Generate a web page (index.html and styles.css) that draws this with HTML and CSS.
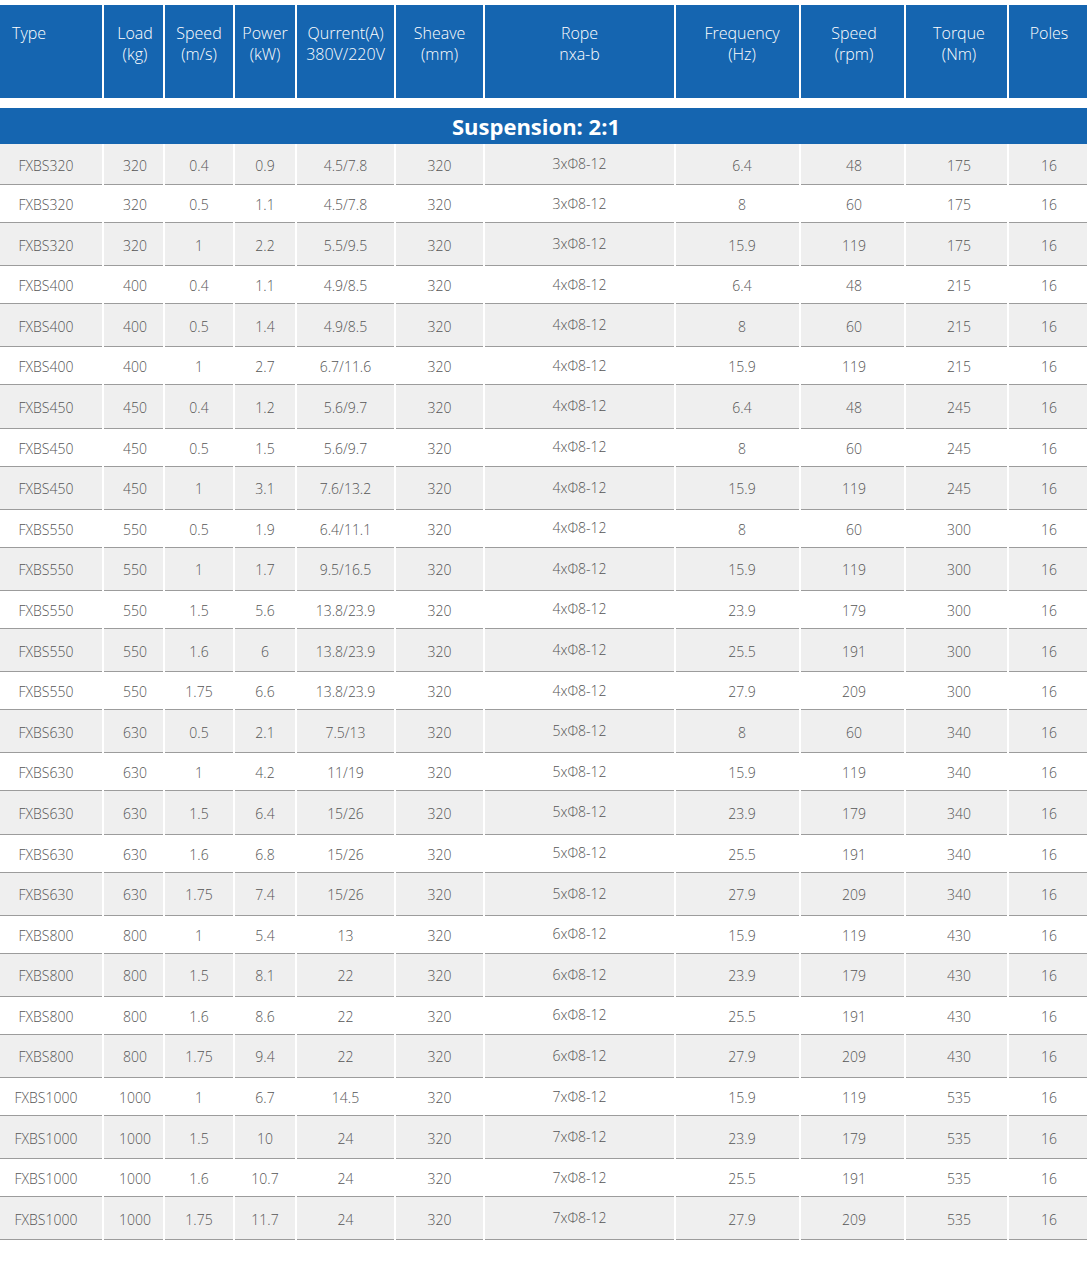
FILE: index.html
```html
<!DOCTYPE html>
<html>
<head>
<meta charset="utf-8">
<link rel="stylesheet" href="styles.css">
</head>
<body>
<div class="spec">
  <div class="row head">
    <div class="c left">Type</div>
    <div class="c">Load<br>(kg)</div>
    <div class="c">Speed<br>(m/s)</div>
    <div class="c">Power<br>(kW)</div>
    <div class="c">Qurrent(A)<br>380V/220V</div>
    <div class="c">Sheave<br>(mm)</div>
    <div class="c">Rope<br>nxa-b</div>
    <div class="c">Frequency<br>(Hz)</div>
    <div class="c">Speed<br>(rpm)</div>
    <div class="c">Torque<br>(Nm)</div>
    <div class="c">Poles</div>
  </div>
  <div class="group">Suspension: 2:1</div>
  <div class="body">
    <div class="row data first"><div class="c t">FXBS320</div><div class="c">320</div><div class="c">0.4</div><div class="c">0.9</div><div class="c">4.5/7.8</div><div class="c">320</div><div class="c r">3xΦ8-12</div><div class="c">6.4</div><div class="c">48</div><div class="c">175</div><div class="c">16</div></div>
    <div class="row data"><div class="c t">FXBS320</div><div class="c">320</div><div class="c">0.5</div><div class="c">1.1</div><div class="c">4.5/7.8</div><div class="c">320</div><div class="c r">3xΦ8-12</div><div class="c">8</div><div class="c">60</div><div class="c">175</div><div class="c">16</div></div>
    <div class="row data"><div class="c t">FXBS320</div><div class="c">320</div><div class="c">1</div><div class="c">2.2</div><div class="c">5.5/9.5</div><div class="c">320</div><div class="c r">3xΦ8-12</div><div class="c">15.9</div><div class="c">119</div><div class="c">175</div><div class="c">16</div></div>
    <div class="row data"><div class="c t">FXBS400</div><div class="c">400</div><div class="c">0.4</div><div class="c">1.1</div><div class="c">4.9/8.5</div><div class="c">320</div><div class="c r">4xΦ8-12</div><div class="c">6.4</div><div class="c">48</div><div class="c">215</div><div class="c">16</div></div>
    <div class="row data"><div class="c t">FXBS400</div><div class="c">400</div><div class="c">0.5</div><div class="c">1.4</div><div class="c">4.9/8.5</div><div class="c">320</div><div class="c r">4xΦ8-12</div><div class="c">8</div><div class="c">60</div><div class="c">215</div><div class="c">16</div></div>
    <div class="row data"><div class="c t">FXBS400</div><div class="c">400</div><div class="c">1</div><div class="c">2.7</div><div class="c">6.7/11.6</div><div class="c">320</div><div class="c r">4xΦ8-12</div><div class="c">15.9</div><div class="c">119</div><div class="c">215</div><div class="c">16</div></div>
    <div class="row data"><div class="c t">FXBS450</div><div class="c">450</div><div class="c">0.4</div><div class="c">1.2</div><div class="c">5.6/9.7</div><div class="c">320</div><div class="c r">4xΦ8-12</div><div class="c">6.4</div><div class="c">48</div><div class="c">245</div><div class="c">16</div></div>
    <div class="row data"><div class="c t">FXBS450</div><div class="c">450</div><div class="c">0.5</div><div class="c">1.5</div><div class="c">5.6/9.7</div><div class="c">320</div><div class="c r">4xΦ8-12</div><div class="c">8</div><div class="c">60</div><div class="c">245</div><div class="c">16</div></div>
    <div class="row data"><div class="c t">FXBS450</div><div class="c">450</div><div class="c">1</div><div class="c">3.1</div><div class="c">7.6/13.2</div><div class="c">320</div><div class="c r">4xΦ8-12</div><div class="c">15.9</div><div class="c">119</div><div class="c">245</div><div class="c">16</div></div>
    <div class="row data"><div class="c t">FXBS550</div><div class="c">550</div><div class="c">0.5</div><div class="c">1.9</div><div class="c">6.4/11.1</div><div class="c">320</div><div class="c r">4xΦ8-12</div><div class="c">8</div><div class="c">60</div><div class="c">300</div><div class="c">16</div></div>
    <div class="row data"><div class="c t">FXBS550</div><div class="c">550</div><div class="c">1</div><div class="c">1.7</div><div class="c">9.5/16.5</div><div class="c">320</div><div class="c r">4xΦ8-12</div><div class="c">15.9</div><div class="c">119</div><div class="c">300</div><div class="c">16</div></div>
    <div class="row data"><div class="c t">FXBS550</div><div class="c">550</div><div class="c">1.5</div><div class="c">5.6</div><div class="c">13.8/23.9</div><div class="c">320</div><div class="c r">4xΦ8-12</div><div class="c">23.9</div><div class="c">179</div><div class="c">300</div><div class="c">16</div></div>
    <div class="row data"><div class="c t">FXBS550</div><div class="c">550</div><div class="c">1.6</div><div class="c">6</div><div class="c">13.8/23.9</div><div class="c">320</div><div class="c r">4xΦ8-12</div><div class="c">25.5</div><div class="c">191</div><div class="c">300</div><div class="c">16</div></div>
    <div class="row data"><div class="c t">FXBS550</div><div class="c">550</div><div class="c">1.75</div><div class="c">6.6</div><div class="c">13.8/23.9</div><div class="c">320</div><div class="c r">4xΦ8-12</div><div class="c">27.9</div><div class="c">209</div><div class="c">300</div><div class="c">16</div></div>
    <div class="row data"><div class="c t">FXBS630</div><div class="c">630</div><div class="c">0.5</div><div class="c">2.1</div><div class="c">7.5/13</div><div class="c">320</div><div class="c r">5xΦ8-12</div><div class="c">8</div><div class="c">60</div><div class="c">340</div><div class="c">16</div></div>
    <div class="row data"><div class="c t">FXBS630</div><div class="c">630</div><div class="c">1</div><div class="c">4.2</div><div class="c">11/19</div><div class="c">320</div><div class="c r">5xΦ8-12</div><div class="c">15.9</div><div class="c">119</div><div class="c">340</div><div class="c">16</div></div>
    <div class="row data"><div class="c t">FXBS630</div><div class="c">630</div><div class="c">1.5</div><div class="c">6.4</div><div class="c">15/26</div><div class="c">320</div><div class="c r">5xΦ8-12</div><div class="c">23.9</div><div class="c">179</div><div class="c">340</div><div class="c">16</div></div>
    <div class="row data"><div class="c t">FXBS630</div><div class="c">630</div><div class="c">1.6</div><div class="c">6.8</div><div class="c">15/26</div><div class="c">320</div><div class="c r">5xΦ8-12</div><div class="c">25.5</div><div class="c">191</div><div class="c">340</div><div class="c">16</div></div>
    <div class="row data"><div class="c t">FXBS630</div><div class="c">630</div><div class="c">1.75</div><div class="c">7.4</div><div class="c">15/26</div><div class="c">320</div><div class="c r">5xΦ8-12</div><div class="c">27.9</div><div class="c">209</div><div class="c">340</div><div class="c">16</div></div>
    <div class="row data"><div class="c t">FXBS800</div><div class="c">800</div><div class="c">1</div><div class="c">5.4</div><div class="c">13</div><div class="c">320</div><div class="c r">6xΦ8-12</div><div class="c">15.9</div><div class="c">119</div><div class="c">430</div><div class="c">16</div></div>
    <div class="row data"><div class="c t">FXBS800</div><div class="c">800</div><div class="c">1.5</div><div class="c">8.1</div><div class="c">22</div><div class="c">320</div><div class="c r">6xΦ8-12</div><div class="c">23.9</div><div class="c">179</div><div class="c">430</div><div class="c">16</div></div>
    <div class="row data"><div class="c t">FXBS800</div><div class="c">800</div><div class="c">1.6</div><div class="c">8.6</div><div class="c">22</div><div class="c">320</div><div class="c r">6xΦ8-12</div><div class="c">25.5</div><div class="c">191</div><div class="c">430</div><div class="c">16</div></div>
    <div class="row data"><div class="c t">FXBS800</div><div class="c">800</div><div class="c">1.75</div><div class="c">9.4</div><div class="c">22</div><div class="c">320</div><div class="c r">6xΦ8-12</div><div class="c">27.9</div><div class="c">209</div><div class="c">430</div><div class="c">16</div></div>
    <div class="row data"><div class="c t">FXBS1000</div><div class="c">1000</div><div class="c">1</div><div class="c">6.7</div><div class="c">14.5</div><div class="c">320</div><div class="c r">7xΦ8-12</div><div class="c">15.9</div><div class="c">119</div><div class="c">535</div><div class="c">16</div></div>
    <div class="row data"><div class="c t">FXBS1000</div><div class="c">1000</div><div class="c">1.5</div><div class="c">10</div><div class="c">24</div><div class="c">320</div><div class="c r">7xΦ8-12</div><div class="c">23.9</div><div class="c">179</div><div class="c">535</div><div class="c">16</div></div>
    <div class="row data"><div class="c t">FXBS1000</div><div class="c">1000</div><div class="c">1.6</div><div class="c">10.7</div><div class="c">24</div><div class="c">320</div><div class="c r">7xΦ8-12</div><div class="c">25.5</div><div class="c">191</div><div class="c">535</div><div class="c">16</div></div>
    <div class="row data"><div class="c t">FXBS1000</div><div class="c">1000</div><div class="c">1.75</div><div class="c">11.7</div><div class="c">24</div><div class="c">320</div><div class="c r">7xΦ8-12</div><div class="c">27.9</div><div class="c">209</div><div class="c">535</div><div class="c">16</div></div>
  </div>
</div>
</body>
</html>
```
FILE: styles.css
```css
html, body {
  margin: 0;
  padding: 0;
  background: #ffffff;
}
body {
  padding-top: 5px;
  font-family: "Open Sans", "Liberation Sans", sans-serif;
}
.spec {
  width: 1087px;
}
.row {
  display: grid;
  grid-template-columns: 102px 59px 68px 60px 97px 87px 189px 123px 103px 101px 78px;
  column-gap: 2px;
}
.row .c {
  box-sizing: border-box;
}
.row .c:nth-child(2) { padding-left: 3px; }
.row .c:nth-child(8) { padding-left: 9px; }
.row .c:nth-child(9) { padding-left: 3px; }
.row .c:nth-child(10) { padding-left: 5px; }
.row .c:nth-child(11) { padding-left: 2px; }
.head {
  height: 93px;
}
.head .c {
  background: #1565b0;
  color: #ffffff;
  font-size: 16px;
  line-height: 21px;
  font-weight: 300;
  text-align: center;
  padding-top: 18px;
}
.head .c.left {
  text-align: left;
  padding-left: 12px;
}
.group {
  margin-top: 10px;
  height: 36px;
  background: #1565b0;
  color: #ffffff;
  font-weight: 700;
  font-size: 22px;
  line-height: 36px;
  text-align: center;
  padding-right: 15px;
}
.data {
  height: 38px;
}
.data:nth-child(odd) {
  height: 43.2px;
}
.data.first {
  height: 41px;
}
.data .c {
  border-bottom: 1px solid #9c9c9c;
  color: #555555;
  font-size: 14px;
  font-weight: 300;
  display: flex;
  align-items: center;
  justify-content: center;
  padding-top: 2px;
}
.data:nth-child(odd) .c {
  background: #efefef;
}
.data .c.t {
  padding-right: 10px;
}
.data .c.r {
  padding-top: 0;
  padding-bottom: 1px;
}
```
